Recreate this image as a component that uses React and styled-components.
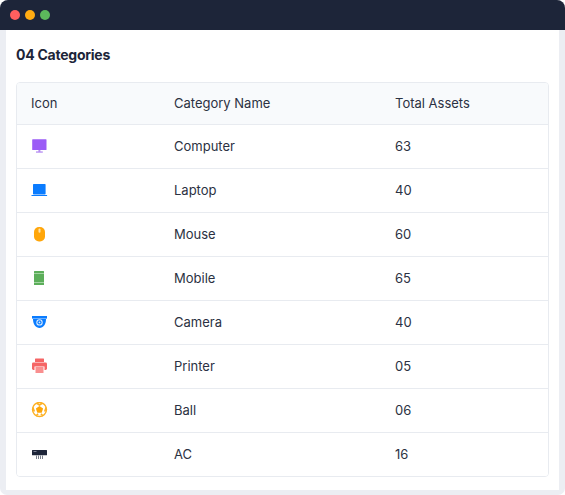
import React from "react";
import styled, { createGlobalStyle } from "styled-components";

const Global = createGlobalStyle`
  html, body { margin: 0; padding: 0; background: #fff; }
  body { font-family: "Inter", "Liberation Sans", sans-serif; }
`;

const Frame = styled.div`
  width: 565px; height: 495px; box-sizing: border-box;
  display: flex; flex-direction: column;
  background: #eceef3; border-radius: 8px 8px 7px 7px; overflow: hidden;
`;
const TitleBar = styled.div`
  height: 30px; flex: none; background: #1d2539;
  display: flex; align-items: center; gap: 5px; padding: 0 10px;
`;
const Dot = styled.span`
  width: 10px; height: 10px; border-radius: 50%; background: ${p => p.$color};
`;
const Body = styled.div`
  flex: 1; margin: 0 6px 6px; background: #fff;
  padding: 16px 10px 13px; display: flex; flex-direction: column;
`;
const Heading = styled.h2`
  margin: 0 0 18px; font-size: 14px; line-height: 18px; font-weight: 700;
  color: #1d2539; letter-spacing: -0.25px;
`;
const Table = styled.div`
  flex: 1; border: 1px solid #e8ebf0; border-radius: 4px; overflow: hidden;
  display: flex; flex-direction: column;
`;
const Row = styled.div`
  display: grid; grid-template-columns: 143px 221px 1fr; align-items: center;
  height: ${p => (p.$head ? "40px" : "42px")}; padding: 0 0 1px 14px;
  background: ${p => (p.$head ? "#f8fafc" : "#fff")};
  & + & { border-top: 1px solid #e8ebf0; }
`;
const Cell = styled.div`
  font-size: 13px; color: #2b3142; line-height: 18px;
`;
const IconBox = styled.div`
  display: flex; align-items: center; height: 18px;
`;

const Svg = ({ children }) => <svg width="17" height="16" viewBox="0 0 17 16">{children}</svg>;

const icons = {
  computer: <Svg><rect x="1.200" y="1.200" width="14.300" height="10.800" rx="0.600" fill="#9b5cf6" /><rect x="7.400" y="12" width="2" height="2" fill="#b58cf2" /><rect x="5" y="13.400" width="6.800" height="1.300" fill="#b58cf2" /></Svg>,
  laptop: <Svg><rect x="2" y="2" width="12.600" height="10.500" rx="0.700" fill="#0a7cff" /><rect x="0.400" y="13" width="15.800" height="1.100" rx="0.500" fill="#0a7cff" /></Svg>,
  mouse: <Svg><rect x="3" y="1" width="11" height="14.500" rx="5" fill="#ffa60a" /><rect x="7.500" y="2.500" width="2" height="4.200" rx="1" fill="#ffe2a8" /></Svg>,
  mobile: <Svg><rect x="3" y="1" width="10" height="14" rx="0.500" fill="#5cae5a" /><rect x="3" y="3" width="10" height="0.800" fill="#b5dcb3" /><rect x="3" y="12.200" width="10" height="0.800" fill="#b5dcb3" /></Svg>,
  camera: <Svg><rect x="1" y="2" width="15" height="2.600" fill="#0a7cff" /><path d="M2 5.100h13c0 5.300-2.800 8.900-6.500 8.900S2 10.400 2 5.100z" fill="#0a7cff" /><circle cx="8.500" cy="8.400" r="3.200" fill="#d8ebff" /><circle cx="8.500" cy="8.400" r="2.100" fill="#0a7cff" /><circle cx="8.500" cy="8.400" r="0.900" fill="#d8ebff" /></Svg>,
  printer: <Svg><rect x="4" y="0.500" width="9" height="3.400" rx="0.500" fill="#f56565" /><rect x="1" y="4.500" width="15" height="7.500" rx="1.400" fill="#f56565" /><rect x="3.500" y="8.500" width="10" height="6.500" fill="#fff" /><rect x="4.500" y="9" width="8" height="6" fill="#f98f8f" /></Svg>,
  ball: <Svg><circle cx="8.500" cy="7.500" r="7" fill="#fff" stroke="#fdb022" strokeWidth="1.400" /><path d="M8.500 3.900l3.600 2.700-1.400 4.200H6.300L4.900 6.600z" fill="#fda60a" /><path d="M5.800 1.300l2.700 1.700 2.700-1.700M1.800 5.300L3.300 9.500M15.200 5.300L13.700 9.500M5.200 13.700l1.900-2M11.800 13.700l-1.900-2" stroke="#fdb022" strokeWidth="1.600" fill="none" /></Svg>,
  ac: <Svg><rect x="1" y="4" width="15" height="5.200" rx="0.500" fill="#1d2539" /><rect x="2.500" y="5.300" width="3" height="0.700" fill="#aab" /><path d="M5.500 9.500v3.500M7.500 9.500v3.500M9.500 9.500v3.500M11.500 9.500v3.500" stroke="#7a808c" strokeWidth="1" /></Svg>,
};

const rows = [
  ["computer", "Computer", "63"], ["laptop", "Laptop", "40"], ["mouse", "Mouse", "60"], ["mobile", "Mobile", "65"],
  ["camera", "Camera", "40"], ["printer", "Printer", "05"], ["ball", "Ball", "06"], ["ac", "AC", "16"],
];

export default function App() {
  return (
    <>
      <Global />
      <Frame>
        <TitleBar>
          <Dot $color="#ff5f5f" /><Dot $color="#ffac12" /><Dot $color="#5cb85c" />
        </TitleBar>
        <Body>
          <Heading>04 Categories</Heading>
          <Table>
            <Row $head><Cell>Icon</Cell><Cell>Category Name</Cell><Cell>Total Assets</Cell></Row>
            {rows.map(([k, name, n]) => (
              <Row key={k}>
                <IconBox>{icons[k]}</IconBox><Cell>{name}</Cell><Cell>{n}</Cell>
              </Row>
            ))}
          </Table>
        </Body>
      </Frame>
    </>
  );
}
